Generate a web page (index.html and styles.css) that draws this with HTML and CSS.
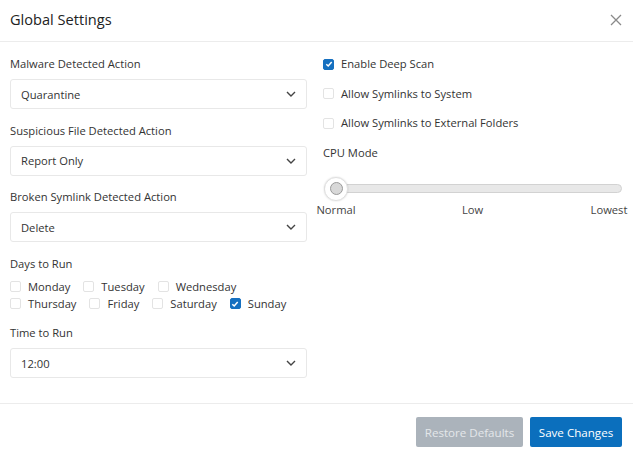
FILE: index.html
```html
<!DOCTYPE html>
<html>
<head>
<meta charset="utf-8">
<link rel="stylesheet" href="styles.css">
</head>
<body>
<div class="modal">
  <div class="header">
    <div class="title">Global Settings</div>
    <svg class="close" width="12" height="12" viewBox="0 0 12 12"><path d="M1 1L11 11M11 1L1 11" stroke="#8a8a8a" stroke-width="1.3" fill="none"/></svg>
  </div>
  <div class="body">
    <div class="col left">
      <div class="group">
        <div class="label">Malware Detected Action</div>
        <div class="select"><span>Quarantine</span><svg class="chev" width="10" height="6" viewBox="0 0 10 6"><path d="M1 1L5 5L9 1" stroke="#444" stroke-width="1.4" fill="none"/></svg></div>
      </div>
      <div class="group">
        <div class="label">Suspicious File Detected Action</div>
        <div class="select"><span>Report Only</span><svg class="chev" width="10" height="6" viewBox="0 0 10 6"><path d="M1 1L5 5L9 1" stroke="#444" stroke-width="1.4" fill="none"/></svg></div>
      </div>
      <div class="group">
        <div class="label">Broken Symlink Detected Action</div>
        <div class="select"><span>Delete</span><svg class="chev" width="10" height="6" viewBox="0 0 10 6"><path d="M1 1L5 5L9 1" stroke="#444" stroke-width="1.4" fill="none"/></svg></div>
      </div>
      <div class="group">
        <div class="label days-label">Days to Run</div>
        <div class="days">
          <div class="dayrow">
            <label class="check"><span class="box"></span>Monday</label>
            <label class="check"><span class="box"></span>Tuesday</label>
            <label class="check"><span class="box"></span>Wednesday</label>
          </div>
          <div class="dayrow">
            <label class="check"><span class="box"></span>Thursday</label>
            <label class="check"><span class="box"></span>Friday</label>
            <label class="check"><span class="box"></span>Saturday</label>
            <label class="check"><span class="box on"><svg width="8" height="8" viewBox="0 0 8 8"><path d="M1.3 4.2L3.2 6L6.7 2" stroke="#fff" stroke-width="1.5" fill="none"/></svg></span>Sunday</label>
          </div>
        </div>
      </div>
      <div class="group">
        <div class="label">Time to Run</div>
        <div class="select"><span>12:00</span><svg class="chev" width="10" height="6" viewBox="0 0 10 6"><path d="M1 1L5 5L9 1" stroke="#444" stroke-width="1.4" fill="none"/></svg></div>
      </div>
    </div>
    <div class="col right">
      <label class="check opt"><span class="box on"><svg width="8" height="8" viewBox="0 0 8 8"><path d="M1.3 4.2L3.2 6L6.7 2" stroke="#fff" stroke-width="1.5" fill="none"/></svg></span>Enable Deep Scan</label>
      <label class="check opt"><span class="box"></span>Allow Symlinks to System</label>
      <label class="check opt"><span class="box"></span>Allow Symlinks to External Folders</label>
      <div class="label cpu">CPU Mode</div>
      <div class="slider">
        <div class="track"></div>
        <div class="thumb"><div class="inner"></div></div>
      </div>
      <div class="ticks"><span>Normal</span><span>Low</span><span>Lowest</span></div>
    </div>
  </div>
  <div class="footer">
    <button class="btn disabled">Restore Defaults</button>
    <button class="btn primary">Save Changes</button>
  </div>
</div>
</body>
</html>
```
FILE: styles.css
```css
* { box-sizing: border-box; }
html, body { margin: 0; padding: 0; background: #fff; }
body { font-family: "Open Sans", "Liberation Sans", sans-serif; color: #333; font-size: 11.2px; }
.modal { width: 633px; height: 457px; display: flex; flex-direction: column; }
.header { height: 42px; border-bottom: 1px solid #ececec; display: flex; align-items: center; justify-content: space-between; padding: 0 11px 4px 10px; }
.title { font-size: 14.6px; color: #222; }
.close { display: block; margin-top: 2px; }
.body { display: flex; gap: 16px; padding: 13px 11px 0 10px; height: 362px; border-bottom: 1px solid #ececec; }
.col { display: flex; flex-direction: column; }
.left { width: 297px; gap: 12.5px; }
.right { flex: 1; }
.label { line-height: 17px; height: 17px; margin-bottom: 7px; color: #333; }
.days-label { margin-bottom: 6px; }
.select { height: 30px; border: 1px solid #e8e8e8; border-radius: 3px; display: flex; align-items: center; justify-content: space-between; padding: 0 10px 0 10px; color: #333; }
.chev { display: block; }
.days { display: flex; flex-direction: column; }
.dayrow { display: flex; gap: 13px; height: 17px; align-items: center; }
.check { display: flex; align-items: center; gap: 7px; line-height: 17px; color: #333; white-space: nowrap; }
.box { width: 11px; height: 11px; border: 1px solid #e3e3e3; border-radius: 2px; display: flex; align-items: center; justify-content: center; background: #fff; margin-top: 1px; flex: none; }
.box.on { background: #1670c0; border-color: #1670c0; }
.box svg { display: block; }
.opt { height: 17px; margin-bottom: 12.5px; }
.cpu { margin-top: 0; margin-bottom: 16px; }
.slider { position: relative; height: 24px; margin-left: 1px; display: flex; align-items: center; }
.track { width: 100%; height: 9px; border-radius: 5px; background: #e8e8e8; border: 1px solid #d2d2d2; }
.thumb { position: absolute; left: 0; top: 0; width: 24px; height: 24px; border-radius: 50%; background: #fff; border: 1px solid #e0e0e0; box-shadow: 0 0 2px rgba(0,0,0,0.15); display: flex; align-items: center; justify-content: center; }
.inner { width: 13px; height: 13px; border-radius: 50%; background: #d8d8d8; border: 1px solid #9a9a9a; }
.ticks { display: flex; justify-content: space-between; margin: 0 -7px 0 -7px; }
.ticks span { width: 40px; text-align: center; line-height: 17px; color: #444; white-space: nowrap; display: flex; justify-content: center; }
.footer { flex: 1; display: flex; justify-content: flex-end; align-items: flex-start; gap: 7px; padding: 13px 11px 0 0; }
.btn { height: 30px; font-family: "Open Sans", "Liberation Sans", sans-serif; font-size: 11.6px; border: none; border-radius: 2px; padding: 0; white-space: nowrap; }
.disabled { background: #abb3bb; color: #e4e7ea; width: 107px; }
.primary { background: #0b6fbd; color: #fff; width: 92px; }
```
